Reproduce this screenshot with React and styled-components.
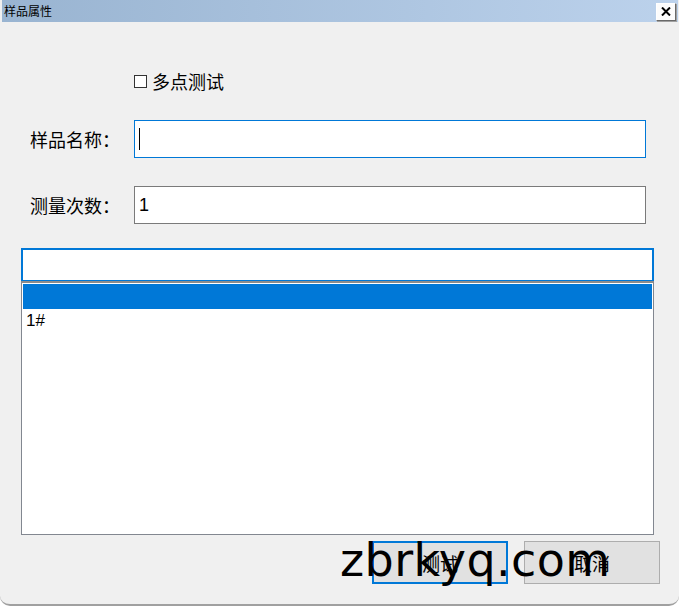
import React from "react";
import styled, { createGlobalStyle } from "styled-components";

const GlobalStyle = createGlobalStyle`
  html, body {
    margin: 0;
    padding: 0;
    background: #ffffff;
  }
  body {
    font-family: "Noto Sans CJK SC", "Noto Sans", sans-serif;
  }
`;

const Window = styled.div`
  position: relative;
  width: 679px;
  height: 606px;
  background: #f0f0f0;
  border-bottom: 2px solid #a0a0a0;
  border-radius: 0 0 10px 10px;
  box-sizing: border-box;
  overflow: hidden;
`;

const TitleBar = styled.div`
  height: 22px;
  margin: 0 1px 0 2px;
  display: flex;
  align-items: center;
  justify-content: space-between;
  padding: 0 2px 0 2px;
  background: linear-gradient(to right, #99b4d1, #bcd2ec);
`;

const Title = styled.span`
  font-size: 12px;
  color: #000;
  line-height: 1;
`;

const CloseButton = styled.div`
  width: 18px;
  height: 16px;
  display: flex;
  align-items: center;
  justify-content: center;
  background: #fcfcfc;
  border: 1px solid #ffffff;
  border-right-color: #696969;
  border-bottom-color: #696969;
  box-shadow: 1px 1px 0 #a0a0a0;
  margin-top: 1px;
`;

const Body = styled.div`
  padding: 47px 0 0 21px;
  display: flex;
  flex-direction: column;
`;

const CheckRow = styled.label`
  display: flex;
  align-items: center;
  gap: 5px;
  margin-left: 113px;
  height: 24px;
  font-size: 18px;
  color: #000;
`;

const CheckBox = styled.span`
  width: 11px;
  height: 11px;
  border: 1px solid #333;
  background: #fff;
`;

const FieldRow = styled.div`
  display: flex;
  align-items: center;
  margin-top: ${(p) => p.$top}px;
`;

const Label = styled.div`
  width: 113px;
  padding-left: 9px;
  box-sizing: border-box;
  font-size: 18px;
  color: #000;
`;

const TextBox = styled.div`
  width: 512px;
  height: 38px;
  box-sizing: border-box;
  border: 1px solid ${(p) => (p.$focused ? "#0078d7" : "#7a7a7a")};
  background: #fff;
  display: flex;
  align-items: center;
  padding-left: 4px;
  font-family: "Liberation Sans", sans-serif;
  font-size: 18px;
  color: #000;
`;

const Caret = styled.span`
  width: 1px;
  height: 22px;
  background: #000;
`;

const Header = styled.div`
  margin-top: 24px;
  width: 633px;
  height: 33px;
  box-sizing: border-box;
  border: 2px solid #0078d7;
  border-bottom-width: 1px;
  background: #fff;
`;

const List = styled.div`
  width: 633px;
  height: 254px;
  box-sizing: border-box;
  border: 1px solid #828790;
  border-top: 2px solid #8c8c8c;
  background: #fff;
  padding: 1px;
`;

const Row = styled.div`
  height: ${(p) => (p.$selected ? 25 : 24)}px;
  background: ${(p) => (p.$selected ? "#0078d7" : "transparent")};
  display: flex;
  align-items: center;
  padding-left: 3px;
  font-family: "Liberation Sans", sans-serif;
  font-size: 17px;
  color: #000;
`;

const ButtonBar = styled.div`
  position: relative;
  display: flex;
  gap: 16px;
  margin: 6px 0 0 351px;
`;

const Button = styled.div`
  width: 136px;
  height: 43px;
  box-sizing: border-box;
  border: ${(p) => (p.$default ? "2px solid #0078d7" : "1px solid #adadad")};
  background: #e1e1e1;
  display: flex;
  align-items: center;
  justify-content: center;
  font-size: 18px;
  color: #000;
`;

const Watermark = styled.div`
  position: absolute;
  left: -32px;
  top: -8px;
  font-family: "DejaVu Sans", sans-serif;
  font-size: 46px;
  letter-spacing: 0.4px;
  color: #000;
  pointer-events: none;
  white-space: nowrap;
`;

export default function App() {
  return (
    <>
      <GlobalStyle />
      <Window>
        <TitleBar>
          <Title>样品属性</Title>
          <CloseButton>
            <svg width="10" height="9" viewBox="0 0 10 9">
              <path d="M1 0.5 L9 8.5 M9 0.5 L1 8.5" stroke="#000" strokeWidth="2" />
            </svg>
          </CloseButton>
        </TitleBar>
        <Body>
          <CheckRow>
            <CheckBox />
            多点测试
          </CheckRow>
          <FieldRow $top={27}>
            <Label>样品名称：</Label>
            <TextBox $focused>
              <Caret />
            </TextBox>
          </FieldRow>
          <FieldRow $top={28}>
            <Label>测量次数：</Label>
            <TextBox>1</TextBox>
          </FieldRow>
          <Header />
          <List>
            <Row $selected />
            <Row>1#</Row>
          </List>
          <ButtonBar>
            <Button $default>测试</Button>
            <Button>取消</Button>
            <Watermark>zbrkyq.com</Watermark>
          </ButtonBar>
        </Body>
      </Window>
    </>
  );
}
